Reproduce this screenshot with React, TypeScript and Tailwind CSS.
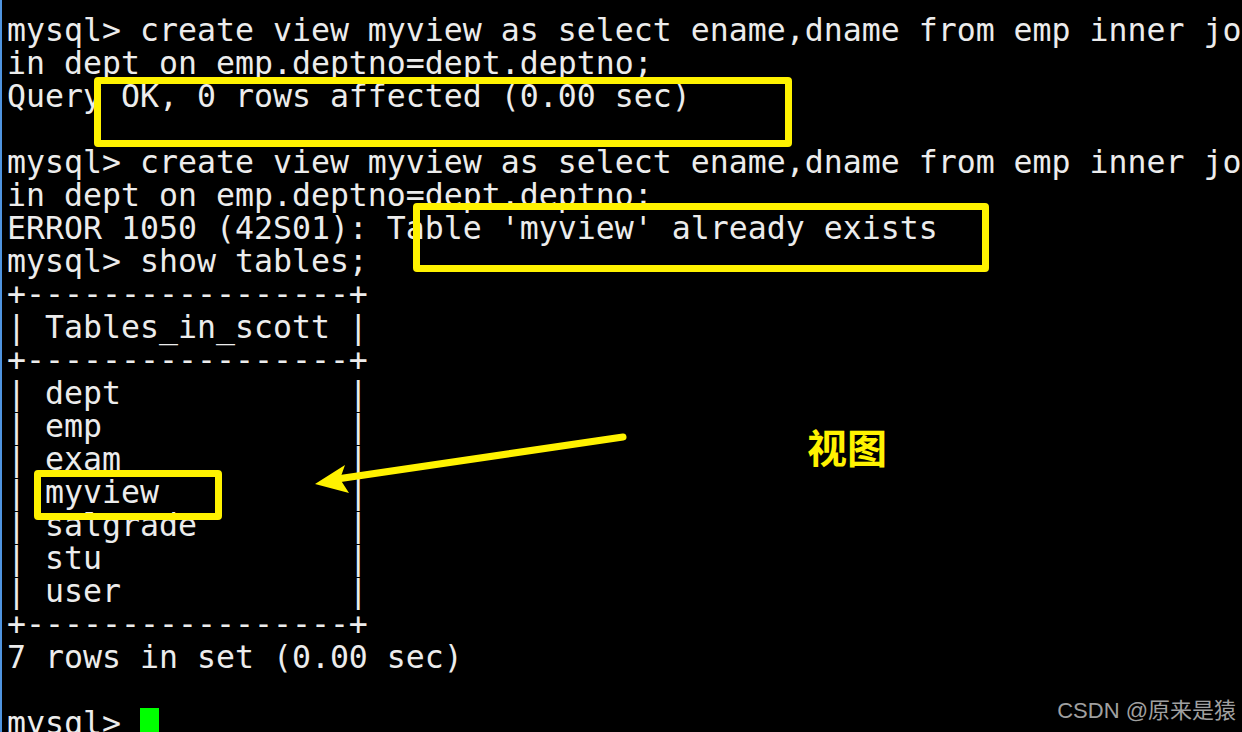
import React from "react";

const lines = [
  "mysql> create view myview as select ename,dname from emp inner jo",
  "in dept on emp.deptno=dept.deptno;",
  "Query OK, 0 rows affected (0.00 sec)",
  "",
  "mysql> create view myview as select ename,dname from emp inner jo",
  "in dept on emp.deptno=dept.deptno;",
  "ERROR 1050 (42S01): Table 'myview' already exists",
  "mysql> show tables;",
  "+-----------------+",
  "| Tables_in_scott |",
  "+-----------------+",
  "| dept            |",
  "| emp             |",
  "| exam            |",
  "| myview          |",
  "| salgrade        |",
  "| stu             |",
  "| user            |",
  "+-----------------+",
  "7 rows in set (0.00 sec)",
  "",
];

const Box = ({ className }: { className: string }) => (
  <div className={"absolute rounded-[4px] border-[7px] border-[#fff200] " + className} />
);

export default function App() {
  return (
    <div className="relative h-[732px] w-[1242px] overflow-hidden bg-black border-l-2 border-[#4f94e0]">
      <div className="pt-[14px] pl-[5px] font-['DejaVu_Sans_Mono',monospace] text-[31.55px] leading-[33px] text-[#ececec]">
        {lines.map((line, i) => (
          <div key={i} className="h-[33px] whitespace-pre">
            {line}
          </div>
        ))}
        <div className="flex h-[33px] items-start whitespace-pre">
          <span>mysql&gt; </span>
          <span className="mt-[1px] h-[26px] w-[19px] bg-[#00ff00]" />
        </div>
      </div>

      {/* annotations */}
      <Box className="left-[92px] top-[77px] h-[70px] w-[698px]" />
      <Box className="left-[411px] top-[203px] h-[69px] w-[576px]" />
      <Box className="left-[32px] top-[470px] h-[50px] w-[188px]" />

      <svg className="absolute left-0 top-0" width="1242" height="732">
        <line x1="621" y1="437" x2="335" y2="479" stroke="#fff200" strokeWidth="7" strokeLinecap="round" />
        <polygon points="313,484 343,465 338,479 347,493" fill="#fff200" />
      </svg>

      <div className="absolute left-[805px] top-[422px] font-['Noto_Sans_CJK_SC',sans-serif] text-[40px] font-bold leading-[48px] text-[#fff200]">
        视图
      </div>

      <div className="absolute right-[6px] top-[697px] font-['Liberation_Sans','Noto_Sans_CJK_SC',sans-serif] text-[22px] leading-[28px] text-[#a0a0a0]">
        CSDN @原来是猿
      </div>
    </div>
  );
}
